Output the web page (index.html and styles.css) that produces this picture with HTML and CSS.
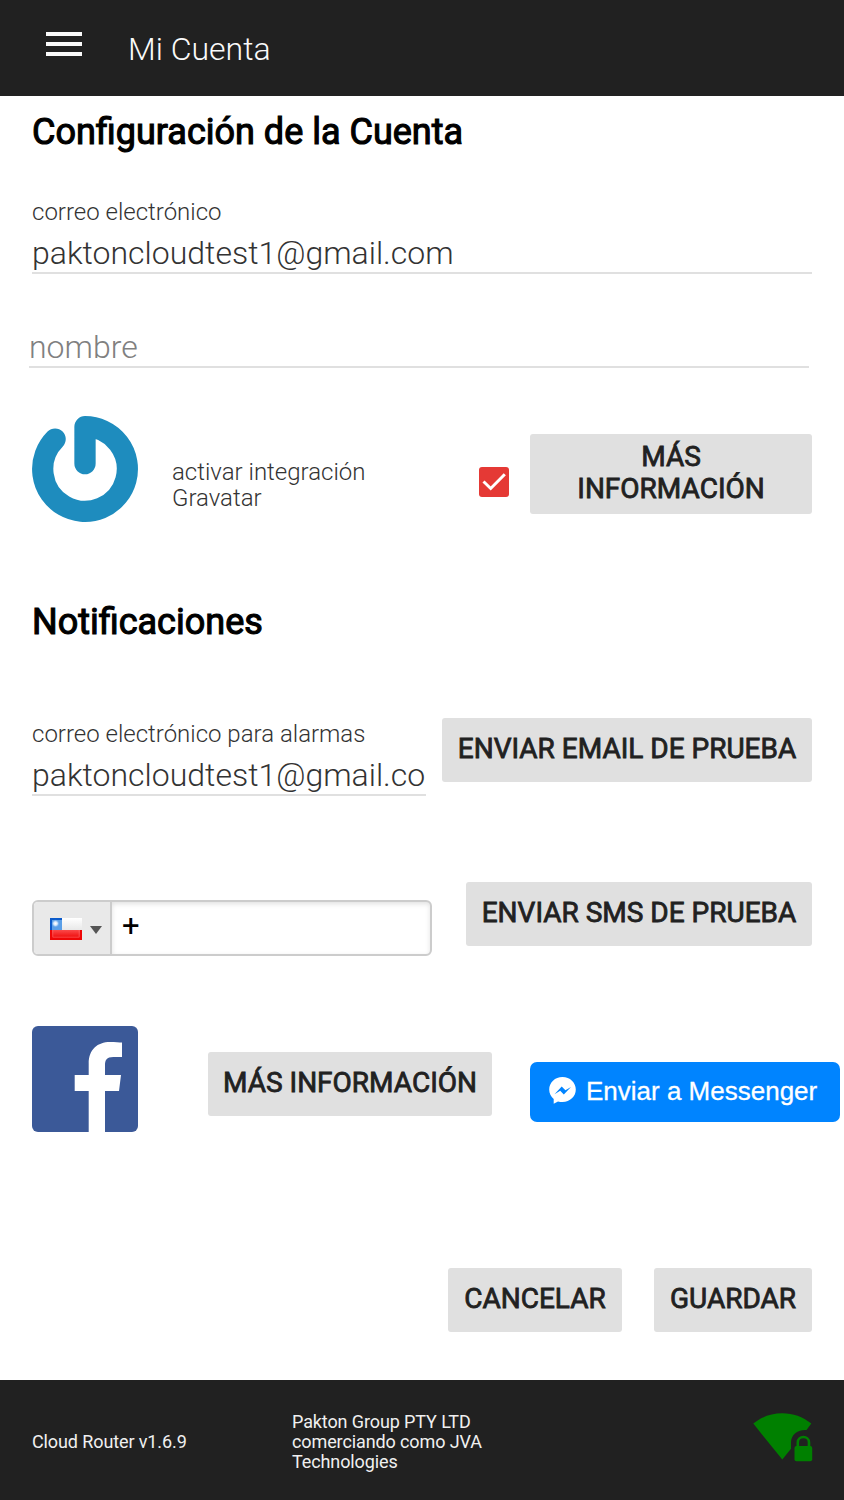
FILE: index.html
```html
<!DOCTYPE html>
<html lang="es">
<head>
<meta charset="utf-8">
<title>Mi Cuenta</title>
<link rel="stylesheet" href="styles.css">
</head>
<body>
<header class="topbar">
  <svg class="menu" viewBox="0 0 36 24"><path d="M0 0h36v4H0zM0 10h36v4H0zM0 20h36v4H0z"/></svg>
  <span class="topbar-title">Mi Cuenta</span>
</header>
<main class="content">
  <h1 class="heading">Configuración de la Cuenta</h1>
  <div class="field field-email">
    <div class="label">correo electrónico</div>
    <div class="value">paktoncloudtest1@gmail.com</div>
  </div>
  <div class="field field-name"><div class="value placeholder">nombre</div></div>
  <section class="gravatar-row">
    <svg class="gravatar" viewBox="0 0 106 106"><path d="M23.1 23.1A42.3 42.3 0 1 0 53 10.7V47.6" fill="none" stroke="#1e8cbe" stroke-width="21.3" stroke-linecap="round" stroke-linejoin="round"/></svg>
    <div class="gravatar-label">activar integración Gravatar</div>
    <svg class="check" viewBox="0 0 30 30"><rect width="30" height="30" rx="3" fill="#e53935"/><path d="M4.5 14.5l7.2 7L25.800 7.200" fill="none" stroke="#fff" stroke-width="3"/></svg>
    <button class="btn btn-wrap">MÁS<br>INFORMACIÓN</button>
  </section>
  <h2 class="heading">Notificaciones</h2>
  <section class="alarm-row">
    <div class="field">
      <div class="label">correo electrónico para alarmas</div>
      <div class="value">paktoncloudtest1@gmail.co</div>
    </div>
    <button class="btn btn-email">ENVIAR EMAIL DE PRUEBA</button>
  </section>
  <section class="sms-row">
    <div class="phone">
      <div class="country">
        <svg class="flag" viewBox="0 0 32 22">
          <defs><linearGradient id="gloss" x1="0" y1="0" x2="0" y2="1"><stop offset="0" stop-color="#fff"/><stop offset="1" stop-color="#e8e8e8"/></linearGradient>
          <linearGradient id="red" x1="0" y1="0" x2="0" y2="1"><stop offset="0" stop-color="#fa4a4a"/><stop offset="1" stop-color="#ee0808"/></linearGradient>
          <radialGradient id="star"><stop offset="0" stop-color="#fff"/><stop offset=".45" stop-color="#d4e8fc"/><stop offset="1" stop-color="#5a9fe8" stop-opacity="0"/></radialGradient></defs>
          <rect x="12" width="20" height="12" fill="url(#gloss)"/>
          <rect width="12" height="12" fill="#0b5bcb"/><rect x="2" y="2" width="10" height="10" fill="#5a9fe8"/>
          <circle cx="5.5" cy="5.5" r="4.2" fill="url(#star)"/>
          <rect y="12" width="32" height="10" fill="#ee0606"/><rect x="2" y="12" width="28" height="8" fill="url(#red)"/>
          <path d="M2.8 12v7.2h26.4V12" fill="none" stroke="#ff7070" stroke-opacity=".55"/>
        </svg>
        <svg class="caret" viewBox="0 0 12 8"><path d="M0 0h12L6 8z"/></svg>
      </div>
      <div class="number">+</div>
    </div>
    <button class="btn btn-sms">ENVIAR SMS DE PRUEBA</button>
  </section>
  <section class="facebook-row">
    <svg class="facebook" viewBox="0 0 106 106"><rect width="106" height="106" rx="6" fill="#3b5998"/><path d="M56.700 106V65H42.700V49h14V37.500C56.700 23.500 65.500 16 78 16c5 0 9.500.3 12 .6V31h-8.700c-6.700 0-8.300 3.200-8.300 7.800V49h16l-2 16H73v41z" fill="#fff"/></svg>
    <button class="btn btn-more">MÁS INFORMACIÓN</button>
    <button class="messenger">
      <svg class="messenger-icon" viewBox="0 0 27 27"><path d="M13.500 0C6 0 .2 5.500.200 12.600c0 3.900 1.700 7.200 4.500 9.500v4.700l4.300-2.400c1.400.4 2.900.6 4.500.6 7.500 0 13.300-5.300 13.300-12.400S21 0 13.500 0z" fill="#fff"/><path d="M5.500 17.200l7.200-7.800 3.700 3.800 5.600-3.200-7.200 7.600-3.600-3.800z" fill="#0084ff"/></svg>
      <span>Enviar a Messenger</span>
    </button>
  </section>
  <section class="actions">
    <button class="btn btn-cancel">CANCELAR</button>
    <button class="btn btn-save">GUARDAR</button>
  </section>
</main>
<footer class="footer">
  <div class="version">Cloud Router v1.6.9</div>
  <div class="company">Pakton Group PTY LTD comerciando como JVA Technologies</div>
  <svg class="wifi" viewBox="0 0 60 49"><path d="M.3 10.600C8.500 3.800 18.500.300 29.300.300S49.700 3.800 58.300 10.600L53.500 17.100C45 16.300 38 21.500 38 29.500v6.300L29.300 46.600z"/><path d="M44.800 34v-4.500c0-7.300 11.200-7.300 11.200 0V34" fill="none" stroke="green" stroke-width="2.600"/><rect x="41.500" y="33" width="17.700" height="15.200" rx="2"/></svg>
</footer>
</body>
</html>
```

FILE: styles.css
```css
* { box-sizing: border-box; }
body { margin: 0; width: 844px; height: 1500px; background: #fff; color: #212121; font-family: Roboto, sans-serif; font-weight: 300; display: flex; flex-direction: column; }
svg { display: block; flex: none; }
.topbar { height: 96px; background: #212121; display: flex; align-items: flex-start; padding: 32px 46px; gap: 46px; }
.menu { width: 36px; height: 24px; fill: #fafafa; }
.topbar-title { color: #fafafa; font-size: 32px; line-height: 34px; white-space: nowrap; }
.content { height: 1284px; padding: 0 32px; }
.heading { margin: 0; height: 72px; font-size: 36px; line-height: 72px; font-weight: 400; color: #000; -webkit-text-stroke: 1.1px #000; white-space: nowrap; }
.label, .value, .gravatar-label { color: #333; }
.label { font-size: 24px; line-height: 28px; white-space: nowrap; }
.value { font-size: 32px; line-height: 38px; height: 40px; border-bottom: 2px solid #e0e0e0; white-space: nowrap; }
.label + .value { margin-top: 8px; }
.value.placeholder { color: #808080; }
.field-email { margin-top: 30px; }
.field-name { margin: 54px 3px 0 -3px; }
.gravatar-row { display: flex; height: 106px; margin-top: 48px; }
.gravatar { width: 106px; height: 106px; }
.gravatar-label { width: 210px; margin: 43px 0 0 34px; font-size: 24px; line-height: 26px; }
.check { width: 30px; height: 30px; margin: 51px 21px 0 auto; }
.btn { border: 0; padding: 0 0 2px; height: 64px; border-radius: 3px; background: #e0e0e0; color: #212121; font: 400 28px/32px Roboto, sans-serif; -webkit-text-stroke: .8px #212121; white-space: nowrap; flex: none; }
.btn-wrap { width: 282px; height: 80px; margin-top: 18px; }
h2.heading { margin-top: 64px; }
.alarm-row { display: flex; justify-content: space-between; margin-top: 60px; height: 78px; }
.alarm-row .field { width: 394px; margin-top: 2px; }
.btn-email { width: 370px; }
.sms-row { display: flex; justify-content: space-between; height: 74px; margin-top: 86px; }
.btn-sms { width: 346px; }
.phone { width: 400px; height: 56px; margin-top: 18px; display: flex; border: 2px solid #ccc; border-radius: 6px; overflow: hidden; }
.country { width: 78px; background: #e9e9e9; border-right: 2px solid #ccc; display: flex; align-items: center; padding: 2px 0 0 16px; gap: 8px; }
.flag { width: 32px; height: 22px; }
.caret { width: 12px; height: 8px; fill: #555; margin-top: 2px; }
.number { flex: 1; padding-left: 10px; font-size: 31px; line-height: 48px; font-weight: 400; color: #000; box-shadow: inset 0 2px 5px rgba(0,0,0,.12); }
.facebook-row { display: flex; margin: 70px -28px 0 0; height: 106px; }
.facebook { width: 106px; height: 106px; }
.btn-more { width: 284px; margin: 26px 38px 0 70px; }
.messenger { border: 0; width: 310px; height: 60px; margin-top: 36px; padding: 0 0 3px 19px; border-radius: 7px; background: #0084ff; color: #fff; font: 26px/30px "Liberation Sans", Arial, sans-serif; -webkit-text-stroke: .3px #fff; display: flex; align-items: center; gap: 10px; white-space: nowrap; }
.messenger-icon { width: 27px; height: 27px; }
.actions { display: flex; justify-content: flex-end; gap: 32px; margin-top: 136px; }
.btn-cancel { width: 174px; }
.btn-save { width: 158px; }
.footer { height: 120px; background: #212121; color: #f0f0f0; display: flex; align-items: center; padding: 3px 32px 0; font-size: 18px; line-height: 20px; font-weight: 400; letter-spacing: -.11px; }
.version { width: 260px; }
.company { width: 200px; }
.wifi { width: 60px; height: 49px; margin: -9px -1px 0 auto; fill: green; }
```
